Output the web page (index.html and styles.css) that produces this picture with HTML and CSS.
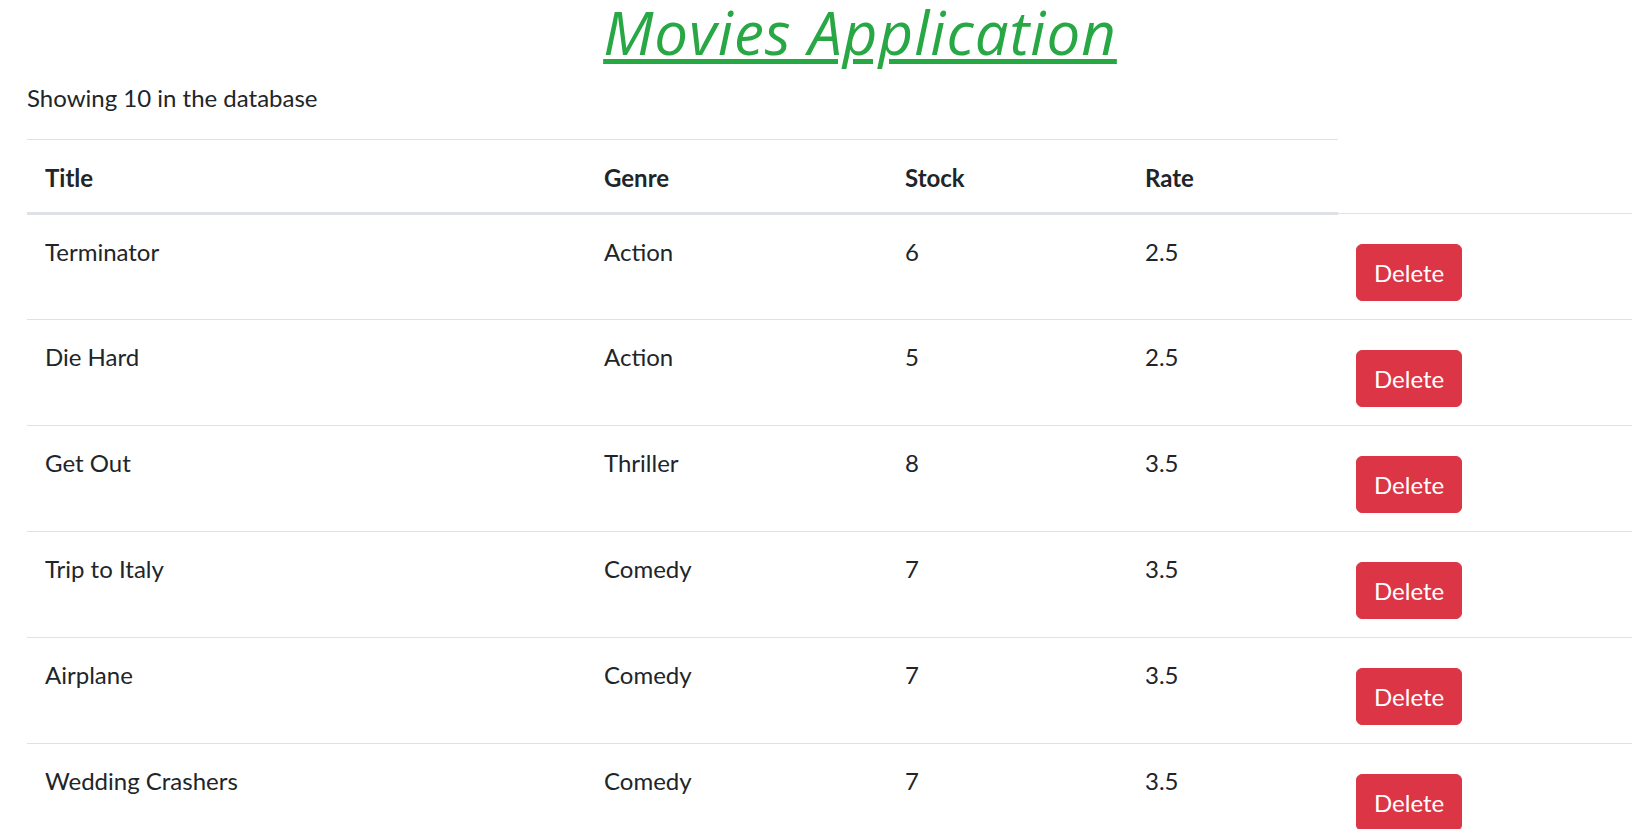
FILE: index.html
```html
<!DOCTYPE html>
<html lang="en">
<head>
<meta charset="utf-8">
<title>Movies Application</title>
<link rel="stylesheet" href="styles.css">
</head>
<body>
<main class="page">
  <h1 class="app-title">Movies Application</h1>
  <p class="summary">Showing 10 in the database</p>
  <table class="movies">
    <colgroup>
      <col class="c-title"><col class="c-genre"><col class="c-stock"><col class="c-rate"><col class="c-action">
    </colgroup>
    <thead>
      <tr><th>Title</th><th>Genre</th><th>Stock</th><th>Rate</th><th class="blank"></th></tr>
    </thead>
    <tbody>
      <tr><td>Terminator</td><td>Action</td><td>6</td><td>2.5</td><td><button class="btn-delete">Delete</button></td></tr>
      <tr><td>Die Hard</td><td>Action</td><td>5</td><td>2.5</td><td><button class="btn-delete">Delete</button></td></tr>
      <tr><td>Get Out</td><td>Thriller</td><td>8</td><td>3.5</td><td><button class="btn-delete">Delete</button></td></tr>
      <tr><td>Trip to Italy</td><td>Comedy</td><td>7</td><td>3.5</td><td><button class="btn-delete">Delete</button></td></tr>
      <tr><td>Airplane</td><td>Comedy</td><td>7</td><td>3.5</td><td><button class="btn-delete">Delete</button></td></tr>
      <tr><td>Wedding Crashers</td><td>Comedy</td><td>7</td><td>3.5</td><td><button class="btn-delete">Delete</button></td></tr>
      <tr><td>The Sixth Sense</td><td>Thriller</td><td>4</td><td>3.5</td><td><button class="btn-delete">Delete</button></td></tr>
      <tr><td>Gone Girl</td><td>Thriller</td><td>4</td><td>4.5</td><td><button class="btn-delete">Delete</button></td></tr>
      <tr><td>The Avengers</td><td>Action</td><td>7</td><td>3.5</td><td><button class="btn-delete">Delete</button></td></tr>
      <tr><td>The Hangover</td><td>Comedy</td><td>7</td><td>3.5</td><td><button class="btn-delete">Delete</button></td></tr>
    </tbody>
  </table>
</main>
</body>
</html>
```
FILE: styles.css
```css
html, body {
  margin: 0;
  padding: 0;
  background: #fff;
  overflow: hidden;
}
body {
  font-family: Lato, "Liberation Sans", sans-serif;
  font-size: 24px;
  line-height: 36px;
  color: #212529;
}
.page {
  padding-left: 27px;
}
.app-title {
  margin: 2px 0 0 61px;
  font-family: "Open Sans", sans-serif;
  font-size: 60px;
  line-height: 60px;
  font-weight: 400;
  font-style: italic;
  letter-spacing: 1px;
  text-align: center;
  color: #28a745;
  text-decoration: underline;
  text-decoration-thickness: 5px;
  text-underline-offset: 4px;
}
.summary {
  margin: 18px 0 23px;
}
.movies {
  border-collapse: collapse;
  table-layout: fixed;
  width: 1605px;
}
.c-title { width: 559px; }
.c-genre { width: 301px; }
.c-stock { width: 240px; }
.c-rate { width: 211px; }
.c-action { width: 294px; }
.movies th,
.movies td {
  padding: 19px 18px 17px;
  text-align: left;
  vertical-align: top;
  border-top: 1px solid #dee2e6;
}
.movies th {
  padding-top: 20px;
  padding-bottom: 16px;
  font-weight: 700;
  border-bottom: 3px solid #dee2e6;
}
.movies th.blank {
  border-top: 0;
  border-bottom: 0;
}
.btn-delete {
  display: block;
  margin: 11px 0 1px;
  padding: 9.5px 17px;
  font-family: Lato, "Liberation Sans", sans-serif;
  font-size: 24px;
  line-height: 36px;
  color: #fff;
  background: #dc3545;
  border: 1px solid #dc3545;
  border-radius: 6px;
  cursor: pointer;
}
```
